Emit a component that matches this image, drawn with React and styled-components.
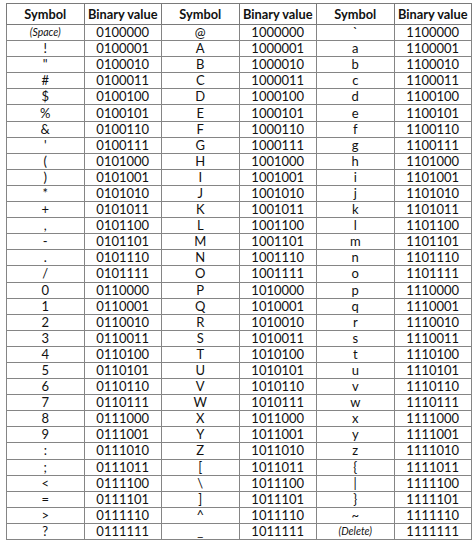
import React from "react";
import styled, { createGlobalStyle } from "styled-components";

const Global = createGlobalStyle`
  html, body { margin: 0; padding: 0; background: #ffffff; }
  body { font-family: Lato, "Open Sans", "Liberation Sans", sans-serif; color: #111; }
`;

const Page = styled.div`
  padding: 3px 3px 0 6px;
`;

const Table = styled.table`
  width: 466px;
  border-collapse: collapse;
  table-layout: fixed;
  border: 1px solid #777;
`;

const Th = styled.th`
  height: 20px;
  padding: 0;
  border: 1px solid #7a7a7a;
  font-weight: 700;
  font-size: 12.8px;
  text-align: center;
  vertical-align: middle;
  line-height: 1;
`;

const Td = styled.td`
  height: 15.1px;
  padding: 0;
  border: 1px solid #858585;
  text-align: center;
  vertical-align: middle;
  font-size: ${(p) => (p.$note ? "10.5px" : "13px")};
  font-style: ${(p) => (p.$note ? "italic" : "normal")};
  line-height: 1;
`;

const bin = (n) => n.toString(2).padStart(7, "0");

const sym = (code) => {
  if (code === 32) return { t: "(Space)", note: true };
  if (code === 127) return { t: "(Delete)", note: true };
  return { t: String.fromCharCode(code), note: false };
};

export default function App() {
  const rows = Array.from({ length: 32 }, (_, i) => i);
  return (
    <Page>
      <Global />
      <Table>
        <thead>
          <tr>
            {[0, 1, 2].map((k) => (
              <React.Fragment key={k}>
                <Th>Symbol</Th>
                <Th>Binary value</Th>
              </React.Fragment>
            ))}
          </tr>
        </thead>
        <tbody>
          {rows.map((i) => (
            <tr key={i}>
              {[32, 64, 96].map((base) => {
                const c = base + i;
                const s = sym(c);
                return (
                  <React.Fragment key={base}>
                    <Td $note={s.note}>{s.t}</Td>
                    <Td>{bin(c)}</Td>
                  </React.Fragment>
                );
              })}
            </tr>
          ))}
        </tbody>
      </Table>
    </Page>
  );
}
